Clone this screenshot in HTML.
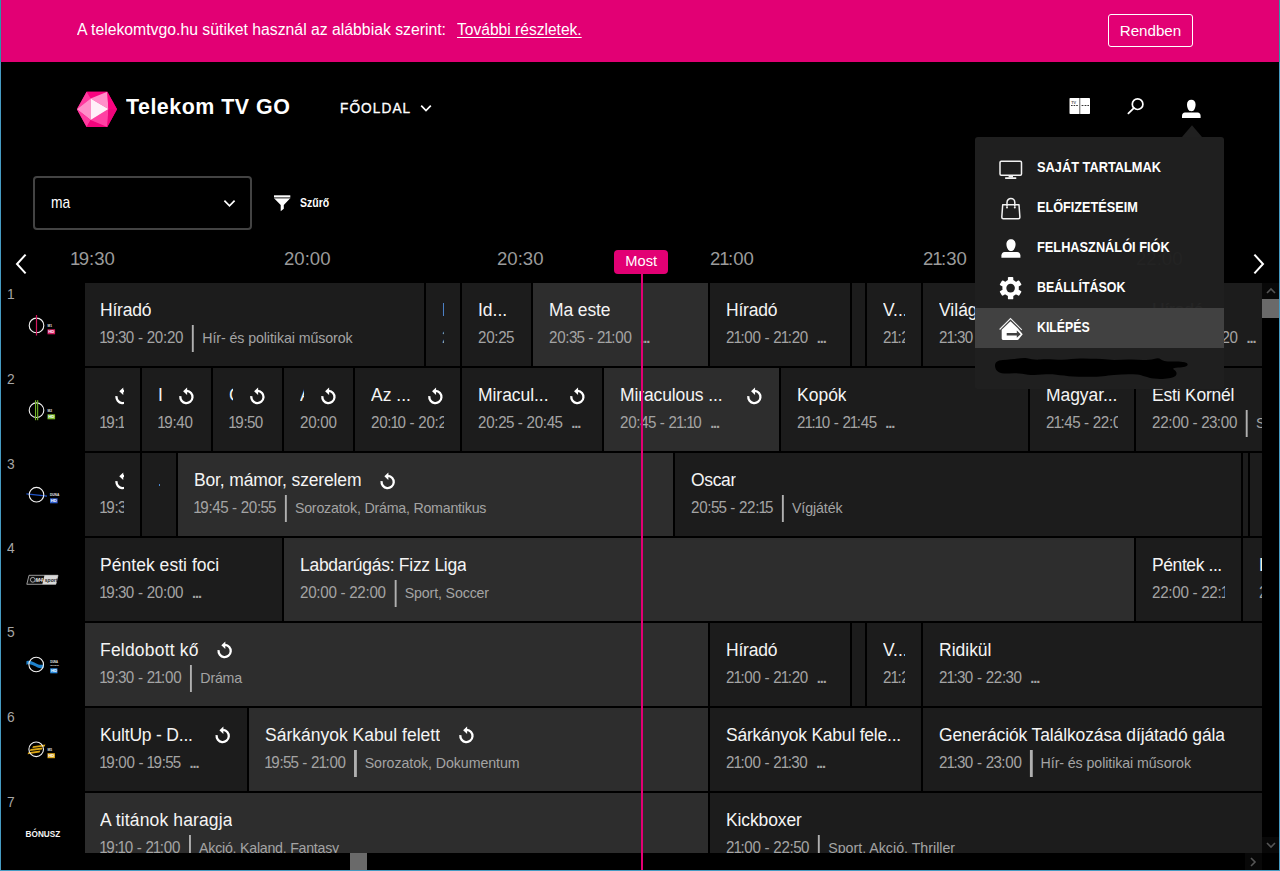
<!DOCTYPE html>
<html lang="hu">
<head>
<meta charset="utf-8">
<title>Telekom TV GO</title>
<style>
*{box-sizing:border-box;margin:0;padding:0}
html,body{width:1280px;height:871px;overflow:hidden;background:#000}
body{font-family:"Liberation Sans",sans-serif;color:#fff;-webkit-font-smoothing:antialiased}
#app{position:relative;width:1280px;height:871px;overflow:hidden;background:#000}
.abs{position:absolute}
.sx{display:inline-block;transform-origin:0 50%;white-space:nowrap}
/* cookie */
.cookie{position:absolute;left:0;top:0;width:1280px;height:62px;background:#e20074}
.cookie .msg{position:absolute;left:77px;top:20.3px;font-size:16px;line-height:20px;color:#fff;white-space:nowrap}
.cookie .lnk{position:absolute;left:457px;top:20.3px;font-size:16px;line-height:20px;color:#fff;white-space:nowrap}
.cookie .lnk .sx{text-decoration:underline;text-underline-offset:2px}
.cookie .btn{position:absolute;left:1108px;top:14px;width:85px;height:33px;border:1px solid #fff;border-radius:3px;font-size:15.5px;line-height:31px;text-align:center}
/* header */
.brand{position:absolute;left:126px;top:94px;font-size:21.5px;line-height:26px;font-weight:bold;letter-spacing:.5px;white-space:nowrap}
.nav{position:absolute;left:340px;top:98px;font-size:15px;line-height:20px;letter-spacing:1.2px;white-space:nowrap;-webkit-text-stroke:.35px #fff}
/* filters */
.sel{position:absolute;left:33px;top:176px;width:219px;height:54px;border:2px solid #434343;border-radius:4px}
.sel .lb{position:absolute;left:15.5px;top:14.5px;font-size:17px;line-height:20px}
.szuro{position:absolute;left:300px;top:193.8px;font-size:12.5px;line-height:18px;font-weight:bold;white-space:nowrap}
/* time bar */
.tb{position:absolute;top:248px;font-size:18px;line-height:22px;color:#9b9b9b;white-space:nowrap;font-weight:normal}
.most{position:absolute;left:614px;top:250px;width:54px;height:24px;border-radius:4px;background:#e20074;font-size:15px;line-height:22.5px;text-align:center;color:#fff}
.nowline{position:absolute;left:640.5px;top:274px;width:2px;height:596px;background:#e20074}
/* channel column */
.tb .sx{transform:scaleX(1.0323);}
.chn{position:absolute;left:6.5px;font-size:15px;line-height:14px;color:#a6a6a6;transform:scaleX(.92);transform-origin:0 50%}
/* grid */
.grid{position:absolute;left:85px;top:283px;width:1177px;height:570px;overflow:hidden;background:#000}
.row{position:absolute;left:0;height:83px;width:1177px}
.c{position:absolute;top:0;height:83px;background:#1c1c1c;overflow:hidden}
.c.cur{background:#2d2d2d}
.in{position:absolute;left:16px;right:16px;top:0;bottom:0;overflow:hidden}
.row .c:first-child .in{left:15px}
.tl{position:absolute;left:0;width:102.88%;top:13px;height:28px;display:flex;align-items:center;white-space:nowrap;transform:scaleX(.972);transform-origin:0 50%}
.t{font-size:18px;line-height:28px;color:#f4f4f4;overflow:hidden;white-space:nowrap;min-width:0;flex:0 1 auto}
.rp{flex:0 0 16.46px;width:16.46px;height:18px;margin-left:18.5px;display:block;position:relative;top:.6px}
.tr .t{margin-right:15.3px;max-width:calc(100% - 34.500px)}
.tr .rp{margin-left:auto;left:-.8px}
.sl{position:absolute;left:0;top:41px;height:28px;white-space:nowrap;display:flex;align-items:center;transform:scaleX(.947);transform-origin:0 50%}
.tm,.g,.dots{font-size:15.5px;line-height:28px;color:#a4a4a4;flex:0 0 auto}
.g{font-size:15px}
.tm{font-size:16px;letter-spacing:-.29px}
.dots{margin-left:9.3px;letter-spacing:-1.2px;font-weight:bold}
.o{margin:0 -1.2px 0 -.8px}
.n{margin:0 -.35px}
.tb .o{margin:0 -1.5px 0 -1px}
.bar{flex:0 0 2.4px;width:2.4px;height:27px;background:#b0b0b0;margin:0 8.7px 0 9px;display:block;position:relative;top:.6px}
/* scrollbars */
.vsb{position:absolute;left:1262px;top:283px;width:17px;height:570px;background:#000}
.hsb{position:absolute;left:0;top:853px;width:1280px;height:17px;background:#000}
/* dropdown */
.dd{position:absolute;left:975px;top:137px;width:249px;height:252px;background:rgba(32,32,32,.975);border-radius:3px}
.dd .it{position:absolute;left:0;width:249px;height:40px}
.dd .it.hl{background:#414141}
.dd .it .lb{position:absolute;left:61.5px;top:9px;font-size:15.5px;line-height:20px;font-weight:bold;white-space:nowrap;color:#fff}
.dd svg{position:absolute}
.frame{position:absolute;left:0;top:62px;width:1280px;height:809px;border-left:1px solid #469bc2;border-right:1px solid #469bc2;border-bottom:1px solid #469bc2;pointer-events:none}
.frame2{position:absolute;left:0;top:0;width:1280px;height:62px;border-left:1px solid #2b95a6;border-right:1px solid #2b95a6;pointer-events:none}
</style>
</head>
<body>
<div id="app">

<!-- cookie banner -->
<div class="cookie">
  <div class="msg"><span class="sx" id="f_msg" style="transform:scaleX(0.9855)">A telekomtvgo.hu sütiket használ az alábbiak szerint:</span></div>
  <div class="lnk"><span class="sx" id="f_lnk" style="transform:scaleX(0.9737)">További részletek.</span></div>
  <div class="btn"><span class="sx" id="f_btn" style="transform-origin:50% 50%;transform:scaleX(0.9774)">Rendben</span></div>
</div>

<!-- header -->
<svg class="abs" style="left:76px;top:91px" width="42" height="37" viewBox="0 0 42 37">
  <polygon points="0.9,18.200 10.600,0.700 31.300,0.700 41,18.200 31.300,35.900 10.600,35.900" fill="#f4037d"/>
  <polygon points="10.600,0.700 31.300,0.700 14.650,7.600" fill="#fa0380"/>
  <polygon points="0.9,18.200 10.600,0.700 14.650,7.600" fill="#ff3a9f"/>
  <polygon points="0.9,18.200 14.650,7.600 14.650,28.900" fill="#ff8fc9"/>
  <polygon points="0.9,18.200 14.650,28.900 10.600,35.900" fill="#ff3a9f"/>
  <polygon points="10.600,35.900 14.650,28.900 31.300,35.900" fill="#f2047c"/>
  <polygon points="14.650,28.900 32.400,18 31.300,35.900" fill="#ff41a3"/>
  <polygon points="32.400,18 41,18.200 31.300,35.900" fill="#f0057b"/>
  <polygon points="14.650,7.600 31.300,0.700 32.400,18" fill="#ff8fc9"/>
  <polygon points="31.300,0.700 41,18.200 32.400,18" fill="#fb0380"/>
  <polygon points="14.650,7.600 32.400,18 14.650,28.900" fill="#fff0f8"/>
</svg>
<div class="brand"><span class="sx" id="f_brand" style="transform:scaleX(0.9958)">Telekom TV GO</span></div>
<div class="nav"><span class="sx" id="f_nav" style="transform:scaleX(0.9092)">FŐOLDAL</span></div>
<svg class="abs" style="left:420px;top:104px" width="12" height="9" viewBox="0 0 12 9"><path d="M1.2 1.6 L6 6.6 L10.8 1.6" fill="none" stroke="#fff" stroke-width="1.7"/></svg>

<!-- header icons -->
<svg class="abs" style="left:1069px;top:97px" width="22" height="18" viewBox="0 0 22 18">
  <rect x="0.5" y="1" width="20.5" height="16" rx="0.800" fill="#fff"/>
  <rect x="10" y="1" width="1.4" height="16" fill="#8a8a8a"/>
  <path d="M2 8.5h1.6M4.6 8.5h1.6M7.2 8.5h1.6M12.6 8.5h1.8M15.6 8.5h1.8M18.4 8.5h1.6" stroke="#333" stroke-width="1.2"/>
  <text x="2.2" y="6.6" font-family="Liberation Sans, sans-serif" font-size="3.800" font-weight="bold" fill="#555">TV</text>
</svg>
<svg class="abs" style="left:1126px;top:96px" width="20" height="20" viewBox="0 0 20 20">
  <circle cx="11.6" cy="8.2" r="5.3" fill="none" stroke="#fff" stroke-width="1.7"/>
  <path d="M7.8 12.2 L2.4 17.4" stroke="#fff" stroke-width="1.8" stroke-linecap="round"/>
</svg>
<svg class="abs" style="left:1181px;top:99px" width="21" height="20" viewBox="0 0 21 20">
  <path d="M10.3 0.7c2.6 0 4.3 2 4.3 4.8 0 2.2-.8 4.600-1.800 5.800c-.5.6-1.500.9-2.500.9s-2-.3-2.500-.9c-1-1.200-1.800-3.600-1.800-5.800 0-2.800 1.700-4.800 4.300-4.800z" fill="#fff"/>
  <path d="M1 19v-2.200c0-1.600 1.200-3 3-3.200h12.600c1.800.2 3 1.600 3 3.200V19z" fill="#fff"/>
</svg>

<!-- filters -->
<div class="sel"><div class="lb"><span class="sx" id="f_ma" style="transform:scaleX(0.8127)">ma</span></div></div>
<svg class="abs" style="left:223px;top:199px" width="13" height="10" viewBox="0 0 13 10"><path d="M1.4 1.6 L6.5 6.8 L11.6 1.6" fill="none" stroke="#fff" stroke-width="1.7"/></svg>
<svg class="abs" style="left:273px;top:194px" width="19" height="18" viewBox="0 0 19 18">
  <rect x="1" y="1.300" width="16.300" height="2.100" fill="#fff"/>
  <rect x="1" y="3.400" width="16.300" height="1.200" fill="#777"/>
  <path d="M1.300 4.600h15.700L10.800 11V14.800L7.700 17.300V11z" fill="#fff"/>
</svg>
<div class="szuro"><span class="sx" id="f_szuro" style="transform:scaleX(0.8407)">Szűrő</span></div>

<!-- time bar -->
<svg class="abs" style="left:14px;top:252px" width="14" height="24" viewBox="0 0 14 24"><path d="M11.6 2.600 L3 12 L11.600 21.400" fill="none" stroke="#fff" stroke-width="2"/></svg>
<svg class="abs" style="left:1252px;top:252px" width="14" height="24" viewBox="0 0 14 24"><path d="M2.4 2.600 L11 12 L2.400 21.400" fill="none" stroke="#fff" stroke-width="2"/></svg>
<div class="tb" style="left:71px"><span class="sx"><span class="o">1</span>9:30</span></div>
<div class="tb" style="left:284px"><span class="sx">20:00</span></div>
<div class="tb" style="left:497px"><span class="sx">20:30</span></div>
<div class="tb" style="left:710px"><span class="sx">2<span class="o">1</span>:00</span></div>
<div class="tb" style="left:923px"><span class="sx">2<span class="o">1</span>:30</span></div>
<div class="tb" style="left:1136px"><span class="sx">22:00</span></div>
<div class="most"><span class="sx" id="f_most" style="transform-origin:50% 50%;transform:scaleX(0.9780)">Most</span></div>

<!-- channel column -->
<div class="chn" style="top:286.5px">1</div>
<div class="chn" style="top:371.5px">2</div>
<div class="chn" style="top:456.5px">3</div>
<div class="chn" style="top:540.5px">4</div>
<div class="chn" style="top:625.3px">5</div>
<div class="chn" style="top:709.5px">6</div>
<div class="chn" style="top:795px">7</div>

<svg class="abs" style="left:0;top:283px" width="85" height="570" viewBox="0 283 85 570" font-family="Liberation Sans, sans-serif">
  <!-- 1: M1 HD -->
  <circle cx="36.500" cy="325.400" r="7.300" fill="none" stroke="#f2f2f2" stroke-width="1.100"/>
  <rect x="35.900" y="315" width="1.200" height="20.500" fill="#d6195f"/>
  <text x="47.600" y="326.500" font-size="3.200" font-weight="bold" fill="#e8e8e8">M1</text>
  <rect x="47.500" y="329.300" width="7.600" height="5" fill="#d6195f"/>
  <text x="48.300" y="333.400" font-size="4.200" font-weight="bold" fill="#fff">HD</text>
  <!-- 2: M2 HD -->
  <circle cx="36.500" cy="410.200" r="7.300" fill="none" stroke="#f2f2f2" stroke-width="1.100"/>
  <rect x="35" y="400.200" width="1.100" height="20" fill="#76b82a"/>
  <rect x="37.100" y="400.200" width="1.100" height="20" fill="#76b82a"/>
  <text x="47.600" y="411.500" font-size="3.200" font-weight="bold" fill="#e8e8e8">M2</text>
  <rect x="47.500" y="414.300" width="7.600" height="5" fill="#76b82a"/>
  <text x="48.300" y="418.400" font-size="4.200" font-weight="bold" fill="#fff">HD</text>
  <!-- 3: Duna HD -->
  <path d="M26.400 493.800 L47 496.200" stroke="#2255c8" stroke-width="1.200"/>
  <circle cx="36.500" cy="494.700" r="7.300" fill="none" stroke="#f2f2f2" stroke-width="1.100"/>
  <text x="50" y="496" font-size="3.200" font-weight="bold" fill="#e8e8e8">DUNA</text>
  <rect x="50" y="498.300" width="7.600" height="5" fill="#2f5fd0"/>
  <text x="50.800" y="502.400" font-size="4.200" font-weight="bold" fill="#fff">HD</text>
  <!-- 4: M4 sport -->
  <path d="M29 575.300 H58 L55.800 584.300 H26.800 Z" fill="#111" stroke="#bdbdbd" stroke-width="0.800"/>
  <path d="M44.500 575.300 H58 L55.800 584.300 H42.300 Z" fill="#d8d8d8"/>
  <circle cx="32.800" cy="579.800" r="2.400" fill="none" stroke="#e0e0e0" stroke-width="0.700"/>
  <text x="35.600" y="582" font-size="5.400" font-weight="bold" font-style="italic" fill="#e8e8e8">M4</text>
  <text x="44.800" y="581.800" font-size="5" font-weight="bold" font-style="italic" fill="#222">sport</text>
  <!-- 5: Duna World HD -->
  <path d="M26.400 661.200 C30 659.800 33 661.800 36.200 663.600 C39.400 665.400 41.600 664.800 43.800 664.200 L43.800 667.600 C41 668.600 38.600 668.400 35.800 666.600 C32.600 664.800 29.800 663.600 26.400 664.800 Z" fill="#1f82cc"/>
  <circle cx="36.200" cy="664.500" r="7.300" fill="none" stroke="#f2f2f2" stroke-width="1.100"/>
  <text x="50.200" y="663.200" font-size="2.700" font-weight="bold" fill="#e8e8e8">DUNA</text>
  <text x="50.200" y="666.200" font-size="2.300" font-weight="bold" fill="#e8e8e8">WORLD</text>
  <rect x="50.200" y="668.300" width="7.200" height="5" fill="#2a8ae0"/>
  <text x="50.900" y="672.400" font-size="4.200" font-weight="bold" fill="#fff">HD</text>
  <!-- 6: M5 HD -->
  <path d="M33 746.200 L45.400 744.600 L44.600 746.400 L32.400 748 Z M30.600 749 L42.800 747.400 L42 749.400 L29.800 751 Z M28.400 752.200 L40.400 750.600 L39.600 752.600 L27.600 754.200 Z" fill="#d9a514"/>
  <circle cx="36.200" cy="749.300" r="7.300" fill="none" stroke="#f2f2f2" stroke-width="1.100"/>
  <text x="47.600" y="750.600" font-size="3.200" font-weight="bold" fill="#e8e8e8">M5</text>
  <rect x="47.500" y="753.200" width="7.400" height="5" fill="#e0a81a"/>
  <text x="48.200" y="757.300" font-size="4.200" font-weight="bold" fill="#fff">HD</text>
  <!-- 7: Bonusz -->
  <text x="25.600" y="836.900" font-size="8.200" font-weight="bold" fill="#f4f4f4" textLength="34.600" lengthAdjust="spacingAndGlyphs">BÓNUSZ</text>
</svg>


<!-- programme grid -->
<div class="grid">
<div class="row" style="top:0px">
<div class="c" style="left:0px;width:339px"><div class="in"><div class="tl"><span class="t" style="letter-spacing:-0.192px">Híradó</span></div><div class="sl"><span class="tm"><span class="o">1</span>9:<span class="n">3</span>0 - 20:20</span><i class="bar"></i><span class="g" style="letter-spacing:-0.083px">Hír- és politikai műsorok</span></div></div></div>
<div class="c" style="left:341px;width:34px"><div class="in"><div class="tl"><span class="t">Időjárás</span></div><div class="sl"><span class="tm">20:20 - 20:2<span class="n">5</span></span></div></div></div>
<div class="c" style="left:377px;width:69px"><div class="in"><div class="tl"><span class="t">Id...</span></div><div class="sl"><span class="tm">20:2<span class="n">5</span> - 20:<span class="n">3</span><span class="n">5</span></span></div></div></div>
<div class="c cur" style="left:448px;width:175px"><div class="in"><div class="tl"><span class="t" style="letter-spacing:-0.109px">Ma este</span></div><div class="sl"><span class="tm">20:<span class="n">3</span><span class="n">5</span> - 2<span class="o">1</span>:00</span><span class="dots">...</span></div></div></div>
<div class="c" style="left:625px;width:140px"><div class="in"><div class="tl"><span class="t" style="letter-spacing:-0.192px">Híradó</span></div><div class="sl"><span class="tm">2<span class="o">1</span>:00 - 2<span class="o">1</span>:20</span><span class="dots">...</span></div></div></div>
<div class="c" style="left:767px;width:13px"><div class="in"><div class="tl"><span class="t">Időjárás</span></div><div class="sl"><span class="tm">2<span class="o">1</span>:20 - 2<span class="o">1</span>:22</span></div></div></div>
<div class="c" style="left:782px;width:54px"><div class="in"><div class="tl"><span class="t">V...</span></div><div class="sl"><span class="tm">2<span class="o">1</span>:22 - 2<span class="o">1</span>:<span class="n">3</span>0</span></div></div></div>
<div class="c" style="left:838px;width:211px"><div class="in"><div class="tl"><span class="t">Világ</span></div><div class="sl"><span class="tm">2<span class="o">1</span>:<span class="n">3</span>0 - 22:00</span><span class="dots">...</span></div></div></div>
<div class="c" style="left:1051px;width:140px"><div class="in"><div class="tl"><span class="t" style="letter-spacing:-0.192px">Híradó</span></div><div class="sl"><span class="tm">22:00 - 22:20</span><span class="dots">...</span></div></div></div>
</div>
<div class="row" style="top:85px">
<div class="c" style="left:0px;width:55px"><div class="in"><div class="tl tr"><span class="t"></span><svg class="rp" viewBox="-8 -10 16 18" preserveAspectRatio="none"><path d="M0.4 -6.1 A6.1 6.1 0 1 1 -6.050 -0.800" fill="none" stroke="#fff" stroke-width="2.300"/><path d="M0.700 -9.600 L0.700 -2 L-3.300 -5.800 Z" fill="#fff"/></svg></div><div class="sl"><span class="tm"><span class="o">1</span>9:<span class="o">1</span><span class="n">5</span> - <span class="o">1</span>9:40</span></div></div></div>
<div class="c" style="left:57px;width:69px"><div class="in"><div class="tl tr"><span class="t">Irány</span><svg class="rp" viewBox="-8 -10 16 18" preserveAspectRatio="none"><path d="M0.4 -6.1 A6.1 6.1 0 1 1 -6.050 -0.800" fill="none" stroke="#fff" stroke-width="2.300"/><path d="M0.700 -9.600 L0.700 -2 L-3.300 -5.800 Z" fill="#fff"/></svg></div><div class="sl"><span class="tm"><span class="o">1</span>9:40 - <span class="o">1</span>9:<span class="n">5</span>0</span></div></div></div>
<div class="c" style="left:128px;width:69px"><div class="in"><div class="tl tr"><span class="t">Cimbi</span><svg class="rp" viewBox="-8 -10 16 18" preserveAspectRatio="none"><path d="M0.4 -6.1 A6.1 6.1 0 1 1 -6.050 -0.800" fill="none" stroke="#fff" stroke-width="2.300"/><path d="M0.700 -9.600 L0.700 -2 L-3.300 -5.800 Z" fill="#fff"/></svg></div><div class="sl"><span class="tm"><span class="o">1</span>9:<span class="n">5</span>0 - 20:00</span></div></div></div>
<div class="c" style="left:199px;width:69px"><div class="in"><div class="tl tr"><span class="t">A kis</span><svg class="rp" viewBox="-8 -10 16 18" preserveAspectRatio="none"><path d="M0.4 -6.1 A6.1 6.1 0 1 1 -6.050 -0.800" fill="none" stroke="#fff" stroke-width="2.300"/><path d="M0.700 -9.600 L0.700 -2 L-3.300 -5.800 Z" fill="#fff"/></svg></div><div class="sl"><span class="tm">20:00 - 20:<span class="o">1</span>0</span></div></div></div>
<div class="c" style="left:270px;width:105px"><div class="in"><div class="tl tr"><span class="t">Az ...</span><svg class="rp" viewBox="-8 -10 16 18" preserveAspectRatio="none"><path d="M0.4 -6.1 A6.1 6.1 0 1 1 -6.050 -0.800" fill="none" stroke="#fff" stroke-width="2.300"/><path d="M0.700 -9.600 L0.700 -2 L-3.300 -5.800 Z" fill="#fff"/></svg></div><div class="sl"><span class="tm">20:<span class="o">1</span>0 - 20:2<span class="n">5</span></span></div></div></div>
<div class="c" style="left:377px;width:140px"><div class="in"><div class="tl tr"><span class="t" style="letter-spacing:-0.048px">Miracul...</span><svg class="rp" viewBox="-8 -10 16 18" preserveAspectRatio="none"><path d="M0.4 -6.1 A6.1 6.1 0 1 1 -6.050 -0.800" fill="none" stroke="#fff" stroke-width="2.300"/><path d="M0.700 -9.600 L0.700 -2 L-3.300 -5.800 Z" fill="#fff"/></svg></div><div class="sl"><span class="tm">20:2<span class="n">5</span> - 20:4<span class="n">5</span></span><span class="dots">...</span></div></div></div>
<div class="c cur" style="left:519px;width:175px"><div class="in"><div class="tl tr"><span class="t" style="letter-spacing:-0.114px">Miraculous ...</span><svg class="rp" viewBox="-8 -10 16 18" preserveAspectRatio="none"><path d="M0.4 -6.1 A6.1 6.1 0 1 1 -6.050 -0.800" fill="none" stroke="#fff" stroke-width="2.300"/><path d="M0.700 -9.600 L0.700 -2 L-3.300 -5.800 Z" fill="#fff"/></svg></div><div class="sl"><span class="tm">20:4<span class="n">5</span> - 2<span class="o">1</span>:<span class="o">1</span>0</span><span class="dots">...</span></div></div></div>
<div class="c" style="left:696px;width:247px"><div class="in"><div class="tl"><span class="t">Kopók</span></div><div class="sl"><span class="tm">2<span class="o">1</span>:<span class="o">1</span>0 - 2<span class="o">1</span>:4<span class="n">5</span></span><span class="dots">...</span></div></div></div>
<div class="c" style="left:945px;width:104px"><div class="in"><div class="tl"><span class="t" style="letter-spacing:-0.064px">Magyar...</span></div><div class="sl"><span class="tm">2<span class="o">1</span>:4<span class="n">5</span> - 22:00</span></div></div></div>
<div class="c" style="left:1051px;width:424px"><div class="in"><div class="tl"><span class="t" style="letter-spacing:-0.216px">Esti Kornél</span></div><div class="sl"><span class="tm">22:00 - 2<span class="n">3</span>:00</span><i class="bar"></i><span class="g">Sorozatok</span></div></div></div>
</div>
<div class="row" style="top:170px">
<div class="c" style="left:0px;width:55px"><div class="in"><div class="tl tr"><span class="t"></span><svg class="rp" viewBox="-8 -10 16 18" preserveAspectRatio="none"><path d="M0.4 -6.1 A6.1 6.1 0 1 1 -6.050 -0.800" fill="none" stroke="#fff" stroke-width="2.300"/><path d="M0.700 -9.600 L0.700 -2 L-3.300 -5.800 Z" fill="#fff"/></svg></div><div class="sl"><span class="tm"><span class="o">1</span>9:<span class="n">3</span>0 - <span class="o">1</span>9:40</span></div></div></div>
<div class="c" style="left:57px;width:34px"><div class="in"><div class="tl"><span class="t">.</span></div><div class="sl"></div></div></div>
<div class="c cur" style="left:93px;width:495px"><div class="in"><div class="tl"><span class="t" style="letter-spacing:-0.142px">Bor, mámor, szerelem</span><svg class="rp" viewBox="-8 -10 16 18" preserveAspectRatio="none"><path d="M0.4 -6.1 A6.1 6.1 0 1 1 -6.050 -0.800" fill="none" stroke="#fff" stroke-width="2.300"/><path d="M0.700 -9.600 L0.700 -2 L-3.300 -5.800 Z" fill="#fff"/></svg></div><div class="sl"><span class="tm"><span class="o">1</span>9:4<span class="n">5</span> - 20:<span class="n">5</span><span class="n">5</span></span><i class="bar"></i><span class="g" style="letter-spacing:-0.229px">Sorozatok, Dráma, Romantikus</span></div></div></div>
<div class="c" style="left:590px;width:566px"><div class="in"><div class="tl"><span class="t" style="letter-spacing:-0.344px">Oscar</span></div><div class="sl"><span class="tm">20:<span class="n">5</span><span class="n">5</span> - 22:<span class="o">1</span><span class="n">5</span></span><i class="bar"></i><span class="g" style="letter-spacing:-0.096px">Vígjáték</span></div></div></div>
<div class="c" style="left:1158px;width:5px"><div class="in"><div class="tl"><span class="t"></span></div><div class="sl"></div></div></div>
<div class="c" style="left:1165px;width:310px"><div class="in"><div class="tl"><span class="t"></span></div><div class="sl"></div></div></div>
</div>
<div class="row" style="top:255px">
<div class="c" style="left:0px;width:197px"><div class="in"><div class="tl"><span class="t" style="letter-spacing:0.042px">Péntek esti foci</span></div><div class="sl"><span class="tm"><span class="o">1</span>9:<span class="n">3</span>0 - 20:00</span><span class="dots">...</span></div></div></div>
<div class="c cur" style="left:199px;width:850px"><div class="in"><div class="tl"><span class="t" style="letter-spacing:-0.282px">Labdarúgás: Fizz Liga</span></div><div class="sl"><span class="tm">20:00 - 22:00</span><i class="bar"></i><span class="g" style="letter-spacing:-0.151px">Sport, Soccer</span></div></div></div>
<div class="c" style="left:1051px;width:105px"><div class="in"><div class="tl"><span class="t" style="letter-spacing:-0.424px">Péntek ...</span></div><div class="sl"><span class="tm">22:00 - 22:<span class="o">1</span><span class="n">5</span></span></div></div></div>
<div class="c" style="left:1158px;width:317px"><div class="in"><div class="tl"><span class="t">Labdarúgás</span></div><div class="sl"><span class="tm">22:<span class="o">1</span><span class="n">5</span> - 2<span class="n">3</span>:00</span></div></div></div>
</div>
<div class="row" style="top:339.79999999999995px">
<div class="c cur" style="left:0px;width:623px"><div class="in"><div class="tl"><span class="t" style="letter-spacing:0.207px">Feldobott kő</span><svg class="rp" viewBox="-8 -10 16 18" preserveAspectRatio="none"><path d="M0.4 -6.1 A6.1 6.1 0 1 1 -6.050 -0.800" fill="none" stroke="#fff" stroke-width="2.300"/><path d="M0.700 -9.600 L0.700 -2 L-3.300 -5.800 Z" fill="#fff"/></svg></div><div class="sl"><span class="tm"><span class="o">1</span>9:<span class="n">3</span>0 - 2<span class="o">1</span>:00</span><i class="bar"></i><span class="g" style="letter-spacing:-0.239px">Dráma</span></div></div></div>
<div class="c" style="left:625px;width:140px"><div class="in"><div class="tl"><span class="t" style="letter-spacing:-0.192px">Híradó</span></div><div class="sl"><span class="tm">2<span class="o">1</span>:00 - 2<span class="o">1</span>:20</span><span class="dots">...</span></div></div></div>
<div class="c" style="left:767px;width:13px"><div class="in"><div class="tl"><span class="t">Időjárás</span></div><div class="sl"><span class="tm">2<span class="o">1</span>:20 - 2<span class="o">1</span>:22</span></div></div></div>
<div class="c" style="left:782px;width:54px"><div class="in"><div class="tl"><span class="t">V...</span></div><div class="sl"><span class="tm">2<span class="o">1</span>:22 - 2<span class="o">1</span>:<span class="n">3</span>0</span></div></div></div>
<div class="c" style="left:838px;width:424px"><div class="in"><div class="tl"><span class="t" style="letter-spacing:-0.003px">Ridikül</span></div><div class="sl"><span class="tm">2<span class="o">1</span>:<span class="n">3</span>0 - 22:<span class="n">3</span>0</span><span class="dots">...</span></div></div></div>
</div>
<div class="row" style="top:424.5px">
<div class="c" style="left:0px;width:162px"><div class="in"><div class="tl tr"><span class="t" style="letter-spacing:-0.197px">KultUp - D...</span><svg class="rp" viewBox="-8 -10 16 18" preserveAspectRatio="none"><path d="M0.4 -6.1 A6.1 6.1 0 1 1 -6.050 -0.800" fill="none" stroke="#fff" stroke-width="2.300"/><path d="M0.700 -9.600 L0.700 -2 L-3.300 -5.800 Z" fill="#fff"/></svg></div><div class="sl"><span class="tm"><span class="o">1</span>9:00 - <span class="o">1</span>9:<span class="n">5</span><span class="n">5</span></span><span class="dots">...</span></div></div></div>
<div class="c cur" style="left:164px;width:459px"><div class="in"><div class="tl"><span class="t" style="letter-spacing:-0.003px">Sárkányok Kabul felett</span><svg class="rp" viewBox="-8 -10 16 18" preserveAspectRatio="none"><path d="M0.4 -6.1 A6.1 6.1 0 1 1 -6.050 -0.800" fill="none" stroke="#fff" stroke-width="2.300"/><path d="M0.700 -9.600 L0.700 -2 L-3.300 -5.800 Z" fill="#fff"/></svg></div><div class="sl"><span class="tm"><span class="o">1</span>9:<span class="n">5</span><span class="n">5</span> - 2<span class="o">1</span>:00</span><i class="bar"></i><span class="g" style="letter-spacing:-0.072px">Sorozatok, Dokumentum</span></div></div></div>
<div class="c" style="left:625px;width:211px"><div class="in"><div class="tl"><span class="t" style="letter-spacing:-0.220px">Sárkányok Kabul fele...</span></div><div class="sl"><span class="tm">2<span class="o">1</span>:00 - 2<span class="o">1</span>:<span class="n">3</span>0</span><span class="dots">...</span></div></div></div>
<div class="c" style="left:838px;width:637px"><div class="in"><div class="tl"><span class="t" style="letter-spacing:-0.132px">Generációk Találkozása díjátadó gála</span></div><div class="sl"><span class="tm">2<span class="o">1</span>:<span class="n">3</span>0 - 2<span class="n">3</span>:00</span><i class="bar"></i><span class="g" style="letter-spacing:-0.083px">Hír- és politikai műsorok</span></div></div></div>
</div>
<div class="row" style="top:509.5px">
<div class="c cur" style="left:0px;width:623px"><div class="in"><div class="tl"><span class="t" style="letter-spacing:0.136px">A titánok haragja</span></div><div class="sl"><span class="tm"><span class="o">1</span>9:<span class="o">1</span>0 - 2<span class="o">1</span>:00</span><i class="bar"></i><span class="g" style="letter-spacing:-0.264px">Akció, Kaland, Fantasy</span></div></div></div>
<div class="c" style="left:625px;width:779px"><div class="in"><div class="tl"><span class="t" style="letter-spacing:-0.128px">Kickboxer</span></div><div class="sl"><span class="tm">2<span class="o">1</span>:00 - 22:<span class="n">5</span>0</span><i class="bar"></i><span class="g" style="letter-spacing:0.002px">Sport, Akció, Thriller</span></div></div></div>
</div>
</div>

<!-- scrollbars -->
<div class="vsb">
  <div class="abs" style="left:0;top:0;width:17px;height:16px;background:#080808"></div>
  <svg class="abs" style="left:4px;top:4px" width="10" height="8" viewBox="0 0 10 8"><path d="M1 6 L5 2 L9 6" fill="none" stroke="#555" stroke-width="1.6"/></svg>
  <div class="abs" style="left:0;top:16px;width:17px;height:19px;background:#6a6a6a"></div>
  <div class="abs" style="left:0;top:554px;width:17px;height:16px;background:#080808"></div>
  <svg class="abs" style="left:4px;top:558px" width="10" height="8" viewBox="0 0 10 8"><path d="M1 2 L5 6 L9 2" fill="none" stroke="#555" stroke-width="1.600"/></svg>
</div>
<div class="hsb">
  <div class="abs" style="left:350px;top:0;width:17px;height:17px;background:#6a6a6a"></div>
  <div class="abs" style="left:1245px;top:0;width:17px;height:17px;background:#080808"></div>
  <svg class="abs" style="left:1249px;top:4px" width="8" height="10" viewBox="0 0 8 10"><path d="M2 1 L6 5 L2 9" fill="none" stroke="#555" stroke-width="1.600"/></svg>
</div>
<div class="nowline"></div>

<!-- user dropdown -->
<svg class="abs" style="left:1182px;top:125px" width="20" height="12" viewBox="0 0 20 12"><path d="M0 12 L10 0.300 L20 12z" fill="#202020"/></svg>
<div class="dd">
  <div class="it" style="top:11px"><div class="lb"><span class="sx" id="f_d1" style="transform:scaleX(0.8261)">SAJÁT TARTALMAK</span></div></div>
  <div class="it" style="top:51px"><div class="lb"><span class="sx" id="f_d2" style="transform:scaleX(0.8185)">ELŐFIZETÉSEIM</span></div></div>
  <div class="it" style="top:91px"><div class="lb"><span class="sx" id="f_d3" style="transform:scaleX(0.8241)">FELHASZNÁLÓI FIÓK</span></div></div>
  <div class="it" style="top:131px"><div class="lb"><span class="sx" id="f_d4" style="transform:scaleX(0.8020)">BEÁLLÍTÁSOK</span></div></div>
  <div class="it hl" style="top:171px"><div class="lb"><span class="sx" id="f_d5" style="transform:scaleX(0.7945)">KILÉPÉS</span></div></div>
  
  <svg style="left:0;top:0" width="249" height="252" viewBox="975 137 249 252">
    <!-- monitor -->
    <rect x="1000" y="161.200" width="21.500" height="14" rx="1.200" fill="none" stroke="#f2f2f2" stroke-width="1.500"/>
    <rect x="1008.600" y="175.600" width="4.400" height="2" fill="#f2f2f2"/>
    <rect x="1005" y="177.300" width="11.400" height="1.600" rx="0.600" fill="#f2f2f2"/>
    <!-- bag -->
    <path d="M1002.700 204.700 H1019 L1019.900 217.200 Q1019.900 218.700 1018.400 218.700 H1003.300 Q1001.800 218.700 1001.800 217.200 Z" fill="none" stroke="#f2f2f2" stroke-width="1.500" stroke-linejoin="round"/>
    <path d="M1007 206.400 V202.400 A3.900 3.900 0 0 1 1014.800 202.400 V206.400" fill="none" stroke="#f2f2f2" stroke-width="1.500"/>
    <circle cx="1007" cy="207.600" r="1" fill="#f2f2f2"/><circle cx="1014.800" cy="207.600" r="1" fill="#f2f2f2"/>
    <!-- user -->
    <path d="M1011 239.200c2.700 0 4.600 2.100 4.600 4.900 0 2.200-.8 4.400-1.800 5.700-.6.800-1.600 1.300-2.800 1.300s-2.200-.5-2.800-1.300c-1-1.300-1.800-3.500-1.800-5.700 0-2.800 1.900-4.900 4.600-4.900z" fill="#fff"/>
    <path d="M1001.400 257.800v-2.400c0-1.900 1.400-3.300 3.200-3.500h12.600c1.800.2 3.200 1.600 3.200 3.500v2.400z" fill="#fff"/>
    <!-- gear -->
    <g transform="translate(1010.600 288.100)">
      <g fill="#fff">
        <rect x="-2.700" y="-11.200" width="5.400" height="22.400" rx="0.900"/>
        <rect x="-2.700" y="-11.200" width="5.400" height="22.400" rx="0.900" transform="rotate(60)"/>
        <rect x="-2.700" y="-11.200" width="5.400" height="22.400" rx="0.900" transform="rotate(120)"/>
        <circle r="8.300"/>
      </g>
      <circle r="4.300" fill="#202020"/>
    </g>
    <!-- exit -->
    <path d="M999.600 329.500 L1010.500 318.500 L1021.800 329.800" fill="none" stroke="#f0f0f0" stroke-width="1.100"/>
    <path d="M1001.700 329.700 L1010.500 321.200 L1017.800 328.200 L1022.700 334.200 L1018.700 339.200 Q1018.300 339.900 1017.500 339.900 H1003 Q1001.700 339.900 1001.700 338.600 Z" fill="#fff"/>
    <path d="M1006.700 332.900 H1016.800 V330.500 L1020.700 334.200 L1016.800 337.800 V335.500 H1006.700 Z" fill="#414141"/>
    <!-- redaction scribble -->
    <path d="M995 365.500 C995.200 362 997.500 360.500 1003 360 C1012 359.600 1020 357.600 1027 358.200 C1031 358.600 1034 360.200 1040 359.600 C1048 358.800 1054 359.800 1062 359.800 C1070 359.600 1076 358 1084 358.600 C1092 359.200 1100 358.600 1108 359.600 C1116 360.400 1124 359.200 1132 359.600 C1140 360 1148 360.400 1154 359 C1157 358 1159 357.800 1161 359.400 C1163 361 1168 361.600 1174 361.600 C1180 361.600 1187 361.800 1187.600 364.200 C1188 366.400 1184 367.400 1178 367.600 C1174 367.800 1172 368.400 1174 369.800 C1177 371.400 1177.400 374.400 1175 376.200 C1171 378.600 1162 379.600 1154 378.600 C1147 377.800 1143 375.400 1137 374.600 C1130 373.800 1122 374.200 1114 375 C1106 375.800 1100 376.800 1090 376.800 C1080 376.800 1072 377 1064 375.600 C1056 374.400 1050 373.600 1042 374.600 C1034 375.400 1028 375 1022 373.800 C1016 372.600 1010 373.400 1004 373.400 C998 373.200 995 370 995 365.500 Z" fill="#000"/>
  </svg>

</div>

<div class="frame"></div><div class="frame2"></div>
</div>
</body>
</html>
